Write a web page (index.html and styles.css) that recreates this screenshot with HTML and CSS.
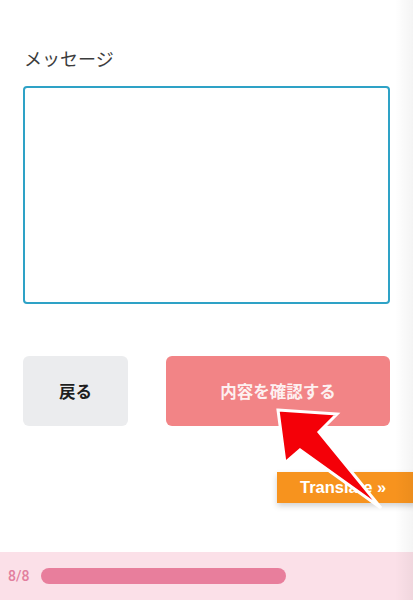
FILE: index.html
```html
<!DOCTYPE html>
<html lang="ja">
<head>
<meta charset="utf-8">
<title>メッセージ</title>
<link rel="stylesheet" href="styles.css">
</head>
<body>
<main class="page">
  <form class="form">
    <label class="label" for="msg">メッセージ</label>
    <textarea id="msg" class="message"></textarea>
    <div class="actions">
      <button type="button" class="btn btn-back">戻る</button>
      <button type="button" class="btn btn-confirm">内容を確認する</button>
    </div>
  </form>
  <div class="spacer"></div>
  <footer class="progress">
    <span class="progress-count">8/8</span>
    <div class="progress-track"><div class="progress-fill"></div></div>
  </footer>
</main>
<button type="button" class="translate">Translate »</button>
<svg class="arrow" width="413" height="600" viewBox="0 0 413 600" aria-hidden="true">
  <polygon points="278,410 337,414 319,432 381,508 300,450 285,463" fill="#f40008" stroke="#ffffff" stroke-width="3" stroke-linejoin="miter"/>
</svg>
<div class="edge-shade"></div>
</body>
</html>
```

FILE: styles.css
```css
html, body {
  margin: 0;
  padding: 0;
  background: #ffffff;
}
body {
  width: 413px;
  height: 600px;
  overflow: hidden;
  position: relative;
  font-family: "Noto Sans CJK JP", "Noto Sans", sans-serif;
}
.page {
  display: flex;
  flex-direction: column;
  height: 600px;
}
.form {
  display: flex;
  flex-direction: column;
  padding: 45px 23px 0 23px;
  width: 367px;
}
.label {
  font-size: 18px;
  line-height: 27px;
  color: #3c3c3c;
  padding-left: 1px;
}
.message {
  margin-top: 14px;
  box-sizing: border-box;
  width: 367px;
  height: 218px;
  border: 2px solid #2ea2c6;
  border-radius: 4px;
  resize: none;
  outline: none;
  background: #fff;
}
.actions {
  display: flex;
  gap: 38px;
  margin-top: 52px;
}
.btn {
  height: 70px;
  border: none;
  border-radius: 6px;
  font-family: "Noto Sans CJK JP", sans-serif;
  font-weight: 700;
  font-size: 16.5px;
  padding: 0;
}
.btn-back {
  width: 105px;
  background: #ebecee;
  color: #1e1e1e;
}
.btn-confirm {
  width: 224px;
  background: #f28486;
  color: #fdf1f1;
}
.spacer {
  flex: 1;
}
.progress {
  height: 48px;
  background: #fbe0e8;
  display: flex;
  align-items: center;
  padding-left: 8px;
  gap: 12px;
}
.progress-count {
  font-family: Roboto, "Liberation Sans", Arial, sans-serif;
  font-size: 14px;
  font-weight: 500;
  color: #e27f9e;
}
.progress-track {
  width: 245px;
  height: 16px;
}
.progress-fill {
  width: 100%;
  height: 100%;
  border-radius: 8px;
  background: #e87e9c;
}
.translate {
  position: absolute;
  left: 277px;
  top: 472px;
  width: 140px;
  height: 31px;
  border: none;
  background: #f7931e;
  color: #ffffff;
  font-family: "Liberation Sans", Arial, sans-serif;
  font-weight: 700;
  font-size: 16.5px;
  text-align: left;
  padding: 0 0 0 23px;
  box-shadow: 0 3px 6px rgba(0,0,0,0.18);
}
.arrow {
  position: absolute;
  left: 0;
  top: 0;
  pointer-events: none;
}
.edge-shade {
  position: absolute;
  right: 0;
  top: 0;
  width: 18px;
  height: 600px;
  background: linear-gradient(to right, rgba(0,0,0,0), rgba(0,0,0,0.045));
  pointer-events: none;
}
```
